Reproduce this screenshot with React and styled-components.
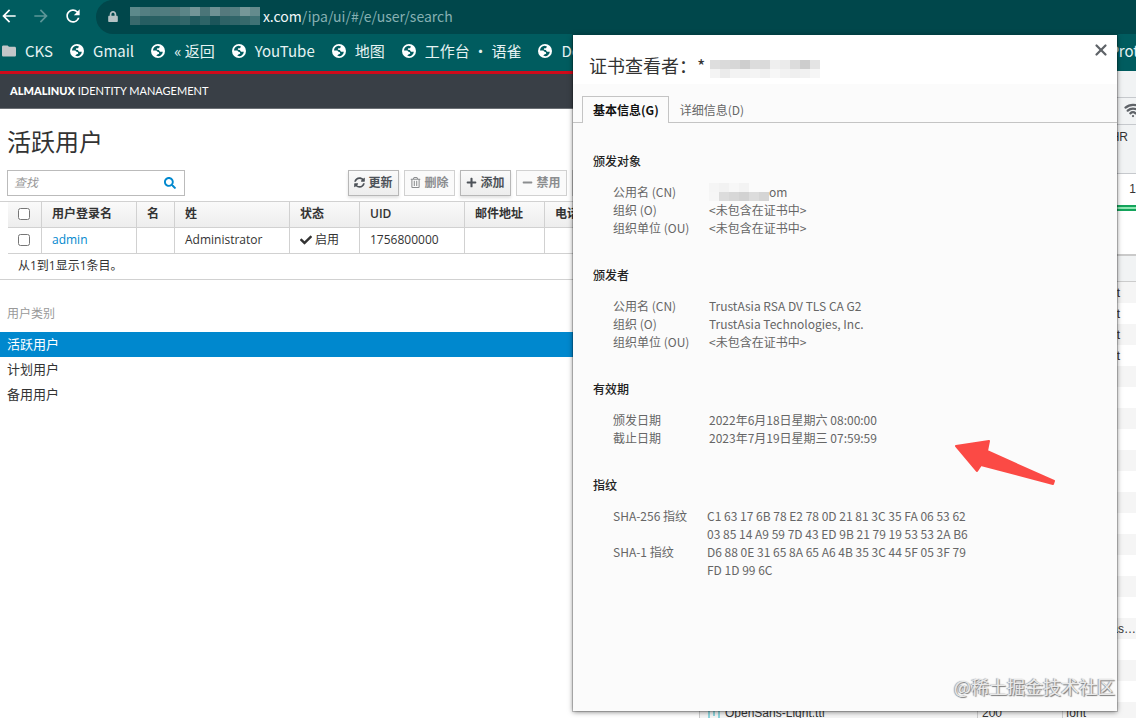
import React from "react";
import styled, { createGlobalStyle } from "styled-components";
import {
  FaCheck,
  FaLock,
  FaMinus,
  FaPlus,
  FaRegTrashAlt,
  FaSearch,
  FaSyncAlt,
} from "react-icons/fa";
import {
  MdArrowBack,
  MdArrowForward,
  MdFolder,
  MdRefresh,
} from "react-icons/md";
import { LuWifi, LuX } from "react-icons/lu";

const GlobalStyle = createGlobalStyle`
  *,
  *::after {
    box-sizing: border-box;
  }
  body {
    margin: 0;
    background: #fff;
    color: #333;
    font-family: "Open Sans", "Noto Sans CJK SC", sans-serif;
    font-size: 12px;
    line-height: 18px;
  }
  button,
  input {
    font: inherit;
    color: inherit;
  }
`;

const Page = styled.div`
  position: relative;
  display: flex;
  flex-direction: column;
  height: 100vh;
  overflow: hidden;
`;

/* browser frame */

const Chrome = styled.header`
  flex: none;
  background: #005c5f;
  color: #e6f3f3;
  font-family: "Noto Sans CJK SC", sans-serif;
`;

const AddressRow = styled.div`
  display: flex;
  align-items: center;
  height: 34px;
`;

const NavButton = styled.button`
  display: flex;
  justify-content: center;
  width: 32px;
  padding: 0 14px 2px 0;
  border: 0;
  background: none;
  color: ${({ $dim }) => ($dim ? "#5c9698" : "#fff")};
  svg {
    flex: none;
    width: 20px;
    height: 20px;
  }
`;

const AddressBar = styled.div`
  display: flex;
  flex: 1;
  align-items: center;
  height: 34px;
  padding: 0 0 2px 12px;
  border-radius: 17px 0 0 17px;
  background: #00474b;
  font-size: 14px;
  line-height: 22px;
  color: #86b0b2;
  svg {
    width: 10px;
    height: 11px;
    margin-right: 12px;
    color: #b4c2c4;
  }
  b {
    margin-left: 3px;
    font-weight: 400;
    color: #f2f8f8;
  }
`;

const Mosaic = styled.span`
  display: grid;
  flex: none;
  grid-template-columns: repeat(${({ $cols }) => $cols}, 10px);
  grid-auto-rows: ${({ $row }) => $row}px;
`;

const Cell = styled.i`
  background: ${({ $color }) => $color};
`;

const Bookmarks = styled.nav`
  display: flex;
  align-items: center;
  gap: 17px;
  height: 37px;
  padding: 0 0 4px 2px;
  overflow: hidden;
`;

const Bookmark = styled.a`
  display: flex;
  flex: none;
  align-items: center;
  gap: 9px;
  color: inherit;
  font-size: 15px;
  line-height: 22px;
  text-decoration: none;
  white-space: nowrap;
  &:last-child {
    margin: 0 -3px 0 auto;
  }
  svg {
    width: 14px;
    height: 14px;
  }
`;

const Body = styled.div`
  display: flex;
  flex: 1;
  min-height: 0;
`;

/* identity management page */

const Ipa = styled.main`
  flex: 1;
  min-width: 0;
  overflow: hidden;
`;

const Brand = styled.div`
  height: 38px;
  padding: 8px 10px;
  border-top: 3px solid #cf0a1a;
  border-bottom: 1px solid #6b6f74;
  background: #393f46;
  color: #fff;
  font-family: Lato, sans-serif;
  font-size: 11px;
  b {
    font-weight: 900;
  }
`;

const Title = styled.h1`
  margin: 16px 7px 11px;
  font-size: 24px;
  font-weight: 400;
  line-height: 34px;
`;

const Toolbar = styled.div`
  display: flex;
  gap: 5px;
  padding: 0 7px 5px;
`;

const Search = styled.label`
  display: flex;
  align-items: center;
  width: 178px;
  height: 26px;
  margin-right: auto;
  padding: 0 8px 0 6px;
  border: 1px solid #bbb;
  color: #0088ce;
  input {
    flex: 1;
    min-width: 0;
    padding: 0;
    border: 0;
    outline: 0;
  }
  input::placeholder {
    color: #999;
    font-style: italic;
  }
`;

const ToolButton = styled.button`
  display: flex;
  flex: none;
  align-items: center;
  justify-content: center;
  gap: 3px;
  min-width: ${({ $wide }) => ($wide ? 64 : 51)}px;
  height: 26px;
  padding: 0 4px 1px;
  border: 1px solid #b7b7b7;
  background: linear-gradient(#fafafa, #ededed);
  box-shadow: 0 2px 3px rgba(3, 3, 3, 0.12);
  color: #4d5258;
  font-weight: 600;
  white-space: nowrap;
  svg {
    width: 11px;
    height: 11px;
  }
  &:disabled {
    border-color: #d1d1d1;
    background: #fafafa;
    box-shadow: none;
    color: #8b8d8f;
  }
`;

const TableWrap = styled.section`
  padding-left: 8px;
  border-top: 1px solid #d1d1d1;
  border-bottom: 1px solid #d1d1d1;
`;

const UserTable = styled.table`
  width: 100%;
  border-spacing: 0;
  table-layout: fixed;
  th,
  td {
    height: 26px;
    padding: 0 10px 2px;
    border-right: 1px solid #d1d1d1;
    border-bottom: 1px solid #d1d1d1;
    text-align: left;
    white-space: nowrap;
  }
  th {
    background: linear-gradient(#fafafa, #ededed);
    font-weight: 600;
  }
  input {
    display: block;
    width: 12px;
    height: 12px;
    margin: 0;
  }
  a {
    color: #0088ce;
    text-decoration: none;
  }
  svg {
    margin-right: 3px;
    vertical-align: -2px;
  }
  tfoot td {
    height: 25px;
    border: 0;
  }
`;

const Facets = styled.aside`
  padding-top: 25px;
  h2 {
    margin: 0;
    padding: 0 7px 9px;
    color: #999;
    font-size: 12px;
    font-weight: 400;
  }
`;

const Facet = styled.a`
  display: block;
  padding: 2px 7px 3px;
  background: ${({ $active }) => ($active ? "#0088ce" : "none")};
  color: ${({ $active }) => ($active ? "#fff" : "#333")};
  font-size: 13px;
  line-height: 20px;
  text-decoration: none;
`;

/* developer tools */

const DevTools = styled.aside`
  flex: none;
  width: 437px;
  overflow: hidden;
  border-left: 1px solid #ccc;
  font-family: "Liberation Sans", sans-serif;
`;

const Strip = styled.div`
  display: flex;
  justify-content: flex-end;
  height: ${({ $height }) => $height}px;
  padding: ${({ $pad }) => $pad || "0"};
  border-bottom: 1px solid #c6c9cd;
  background: #f1f3f4;
  svg {
    flex: none;
    margin-right: -6px;
  }
`;

const Timeline = styled.div`
  display: flex;
  flex-direction: column;
  height: 82px;
  padding-top: 6px;
  border-bottom: 2px solid #cacaca;
  text-align: right;
  &::after {
    content: "";
    height: 6px;
    margin-top: 7px;
    border: solid #14a45c;
    border-width: 2px 0;
    background: #8fe8b4;
  }
`;

const Requests = styled.table`
  width: 100%;
  border-spacing: 0;
  table-layout: fixed;
  th,
  td {
    height: 21px;
    padding: 0 4px;
    border-right: 1px solid #ccc;
    overflow: hidden;
    text-align: left;
    line-height: 14px;
    white-space: nowrap;
  }
  th:last-child,
  td:last-child {
    padding: 0 0 0 3px;
    border-right: 0;
  }
  th {
    height: 26px;
    border-bottom: 1px solid #ccc;
    background: #f1f3f4;
    font-weight: 400;
  }
  tbody tr:nth-child(odd) {
    background: #f5f5f5;
  }
`;

const FontIcon = styled.svg`
  margin: 0 5px 0 4px;
  vertical-align: -3px;
`;

/* certificate viewer */

const Dialog = styled.div`
  position: absolute;
  top: 35px;
  right: 19px;
  bottom: 7px;
  width: 544px;
  background: #fbfbfb;
  box-shadow: 0 0 0 1px rgba(0, 0, 0, 0.18), 0 1px 5px rgba(0, 0, 0, 0.5);
  color: #666;
  font-family: "Noto Sans CJK SC", sans-serif;
`;

const DialogHeader = styled.header`
  display: flex;
  align-items: flex-start;
  height: 49px;
  padding: 0 7px 0 16px;
  background: #fff;
  h2 {
    margin: 17px 5px 0 0;
    color: #333;
    font-size: 18px;
    font-weight: 400;
    line-height: 26px;
  }
  h2 + span {
    margin-top: 25px;
  }
`;

const CloseButton = styled.button`
  display: flex;
  margin: 6px 0 0 auto;
  padding: 0;
  border: 0;
  background: none;
  color: #5f6368;
`;

const Tabs = styled.div`
  display: flex;
  height: 39px;
  padding: 12px 9px 0;
  border-bottom: 1px solid #c4c4c4;
`;

const Tab = styled.button`
  height: 27px;
  padding: 0 9px 0 10px;
  border: 1px solid ${({ $active }) => ($active ? "#c4c4c4" : "transparent")};
  border-bottom: 0;
  background: ${({ $active }) => ($active ? "#fbfbfb" : "none")};
  color: ${({ $active }) => ($active ? "#111" : "#666")};
  font-weight: ${({ $active }) => ($active ? 700 : 400)};
  &[aria-selected="true"] {
    margin-bottom: -1px;
  }
`;

const Details = styled.div`
  padding: 29px 20px 0;
`;

const Section = styled.section`
  margin-bottom: 29px;
  h3 {
    margin: 0 0 13px;
    color: #222;
    font-size: 12px;
    font-weight: 500;
  }
  dl {
    display: grid;
    grid-template-columns: ${({ $labels }) => $labels}px 262px;
    margin: 0 0 0 20px;
  }
  dd {
    display: flex;
    margin: 0;
  }
`;

const Arrow = styled.svg`
  position: absolute;
  top: 403px;
  right: 60px;
`;

const Watermark = styled.div`
  position: absolute;
  right: 2px;
  bottom: 12px;
  color: #e9e9e9;
  font-size: 18px;
  line-height: 26px;
  text-shadow: 1px 1px 1px #777, -1px 0 1px #999;
`;

const urlBlocks = [
  "#5d898b", "#547f82", "#4f7b7d", "#517d80", "#56797b", "#5b8587", "#739597",
  "#4b7578", "#6f9194", "#55797d", "#557f82", "#769798", "#648b8d",
  "#39696c", "#265e62", "#285f62", "#2a6265", "#2c6164", "#316669", "#205a5e",
  "#2d6467", "#1c555a", "#2e6266", "#306569", "#36696b", "#3f7275",
];

const titleBlocks = [
  "#dedede", "#dadada", "#d7d7d7", "#cecece", "#dcdcdc", "#dadada", "#efefef",
  "#ebebeb", "#dcdcdc", "#cdcdcd", "#e4e4e4",
  "#f4f4f4", "#ebebeb", "#f3f3f3", "#f2f2f2", "#f4f4f4", "#f0f0f0", "#f7f7f7",
  "#f2f2f2", "#efefef", "#f1f1f1", "#f6f6f6",
];

const nameBlocks = [
  "#f5f5f5", "#f2f2f2", "#f7f7f7", "#f3f3f3", "#fbfbfb", "#fbfbfb",
  "#f6f6f6", "#dcdcdc", "#d7d7d7", "#d2d2d2", "#dcdcdc", "#d5d5d5",
];

const Blocks = ({ colors, cols, row }) => (
  <Mosaic $cols={cols} $row={row}>
    {colors.map((color, i) => (
      <Cell key={i} $color={color} />
    ))}
  </Mosaic>
);

const bookmarks = ["Gmail", "« 返回", "YouTube", "地图", "工作台 ・ 语雀", "Demo", "Prot"];

const columnWidths = [34, 95, 38, 115, 70, 105, 80];

const missing = "<未包含在证书中>";

const sections = [
  {
    title: "颁发对象",
    rows: [
      ["公用名 (CN)", null],
      ["组织 (O)", missing],
      ["组织单位 (OU)", missing],
    ],
  },
  {
    title: "颁发者",
    rows: [
      ["公用名 (CN)", "TrustAsia RSA DV TLS CA G2"],
      ["组织 (O)", "TrustAsia Technologies, Inc."],
      ["组织单位 (OU)", missing],
    ],
  },
  {
    title: "有效期",
    rows: [
      ["颁发日期", "2022年6月18日星期六 08:00:00"],
      ["截止日期", "2023年7月19日星期三 07:59:59"],
    ],
  },
  {
    title: "指纹",
    labels: 94,
    rows: [
      [
        "SHA-256 指纹",
        "C1 63 17 6B 78 E2 78 0D 21 81 3C 35 FA 06 53 62 03 85 14 A9 59 7D 43 ED 9B 21 79 19 53 53 2A B6",
      ],
      ["SHA-1 指纹", "D6 88 0E 31 65 8A 65 A6 4B 35 3C 44 5F 05 3F 79 FD 1D 99 6C"],
    ],
  },
];

const requestTypes = Array.from({ length: 21 }, (_, i) => {
  if (i < 4) return "stylesheet";
  if (i === 16) return "text/ecmas…";
  return i === 20 ? "font" : "script";
});

const BrowserChrome = () => (
  <Chrome>
    <AddressRow>
      <NavButton aria-label='后退'>
        <MdArrowBack />
      </NavButton>
      <NavButton aria-label='前进' $dim>
        <MdArrowForward />
      </NavButton>
      <NavButton aria-label='刷新'>
        <MdRefresh />
      </NavButton>
      <AddressBar>
        <FaLock />
        <Blocks colors={urlBlocks} cols={13} row={9} />
        <span>
          <b>x.com</b>/ipa/ui/#/e/user/search
        </span>
      </AddressBar>
    </AddressRow>
    <Bookmarks>
      <Bookmark href='#cks'>
        <MdFolder color='#c3c6c8' viewBox='2 3 20 18' />
        CKS
      </Bookmark>
      {bookmarks.map((name) => (
        <Bookmark href='#bookmark' key={name}>
          <svg viewBox='0 0 14 14'>
            <circle cx='7' cy='7' r='7' fill='#fff' />
            <path
              d='M2 6.5c0-2.6 2-4.6 4.6-4.7L9 2.4 8 4.2H6.2L5.8 5.8l2 .3 1.2 1.6h2.8c-.2 2.4-2 4.4-4.6 4.6l-2-.7 1.6-1.4 1.4-.4-.3-1.5-1.8-.7-.7-1.2z'
              fill='#005c5f'
            />
          </svg>
          {name}
        </Bookmark>
      ))}
    </Bookmarks>
  </Chrome>
);

const UsersPage = () => (
  <Ipa>
    <Brand>
      <b>ALMALINUX</b> IDENTITY MANAGEMENT
    </Brand>
    <Title>活跃用户</Title>
    <Toolbar>
      <Search>
        <input type='text' placeholder='查找' aria-label='查找' />
        <FaSearch />
      </Search>
      <ToolButton>
        <FaSyncAlt />
        更新
      </ToolButton>
      <ToolButton disabled>
        <FaRegTrashAlt />
        删除
      </ToolButton>
      <ToolButton>
        <FaPlus />
        添加
      </ToolButton>
      <ToolButton disabled>
        <FaMinus />
        禁用
      </ToolButton>
      <ToolButton disabled>
        <FaCheck />
        启用
      </ToolButton>
      <ToolButton $wide>操作</ToolButton>
    </Toolbar>
    <TableWrap>
      <UserTable>
        <colgroup>
          {columnWidths.map((width) => (
            <col key={width} width={width} />
          ))}
          <col />
        </colgroup>
        <thead>
          <tr>
            <th>
              <input type='checkbox' aria-label='全选' />
            </th>
            <th>用户登录名</th>
            <th>名</th>
            <th>姓</th>
            <th>状态</th>
            <th>UID</th>
            <th>邮件地址</th>
            <th>电话号码</th>
          </tr>
        </thead>
        <tbody>
          <tr>
            <td>
              <input type='checkbox' aria-label='admin' />
            </td>
            <td>
              <a href='#admin'>admin</a>
            </td>
            <td />
            <td>Administrator</td>
            <td>
              <FaCheck />
              启用
            </td>
            <td>1756800000</td>
            <td />
            <td />
          </tr>
        </tbody>
        <tfoot>
          <tr>
            <td colSpan='8'>从1到1显示1条目。</td>
          </tr>
        </tfoot>
      </UserTable>
    </TableWrap>
    <Facets>
      <h2>用户类别</h2>
      <Facet href='#active' $active>
        活跃用户
      </Facet>
      <Facet href='#stage'>计划用户</Facet>
      <Facet href='#preserved'>备用用户</Facet>
    </Facets>
  </Ipa>
);

const NetworkPanel = () => (
  <DevTools>
    <Strip $height={27} />
    <Strip $height={27} $pad='3px 0'>
      <LuWifi size={18} color='#5f6368' strokeWidth={3} />
    </Strip>
    <Strip $height={49} $pad='3px 8px'>
      XHR
    </Strip>
    <Timeline>1</Timeline>
    <Requests>
      <colgroup>
        <col width='278' />
        <col width='85' />
        <col />
      </colgroup>
      <thead>
        <tr>
          <th>Name</th>
          <th>Status</th>
          <th>Type</th>
        </tr>
      </thead>
      <tbody>
        {requestTypes.map((type, i) => (
          <tr key={i}>
            <td>
              {type === "font" && (
                <>
                  <FontIcon width='12' height='14' fill='none' stroke='#27b5c4'>
                    <path d='M1 1h10v12H1zM4 4h4M6 4v6' />
                  </FontIcon>
                  OpenSans-Light.ttf
                </>
              )}
            </td>
            <td>{type === "font" && "200"}</td>
            <td>{type}</td>
          </tr>
        ))}
      </tbody>
    </Requests>
  </DevTools>
);

const CertificateDialog = () => (
  <Dialog role='dialog' aria-label='证书查看者'>
    <DialogHeader>
      <h2>证书查看者：*</h2>
      <Blocks colors={titleBlocks} cols={11} row={9} />
      <CloseButton aria-label='关闭'>
        <LuX size={18} strokeWidth={3} />
      </CloseButton>
    </DialogHeader>
    <Tabs role='tablist'>
      <Tab role='tab' aria-selected='true' $active>
        基本信息(G)
      </Tab>
      <Tab role='tab' aria-selected='false'>
        详细信息(D)
      </Tab>
    </Tabs>
    <Details>
      {sections.map(({ title, rows, labels = 96 }) => (
        <Section key={title} $labels={labels}>
          <h3>{title}</h3>
          <dl>
            {rows.map(([label, value]) => (
              <React.Fragment key={label}>
                <dt>{label}</dt>
                <dd>
                  {value || (
                    <>
                      <Blocks colors={nameBlocks} cols={6} row={9} />
                      om
                    </>
                  )}
                </dd>
              </React.Fragment>
            ))}
          </dl>
        </Section>
      ))}
    </Details>
    <Arrow width='104' height='50' viewBox='0 0 104 50'>
      <path
        d='M3 8 36 3 34 13 101 43 100 46 28 27 24 33z'
        fill='#fb4a45'
        stroke='#fb4a45'
        strokeWidth='2'
        strokeLinejoin='round'
      />
    </Arrow>
    <Watermark>@稀土掘金技术社区</Watermark>
  </Dialog>
);

const App = () => {
  return (
    <Page>
      <GlobalStyle />
      <BrowserChrome />
      <Body>
        <UsersPage />
        <NetworkPanel />
      </Body>
      <CertificateDialog />
    </Page>
  );
};

export default App;
